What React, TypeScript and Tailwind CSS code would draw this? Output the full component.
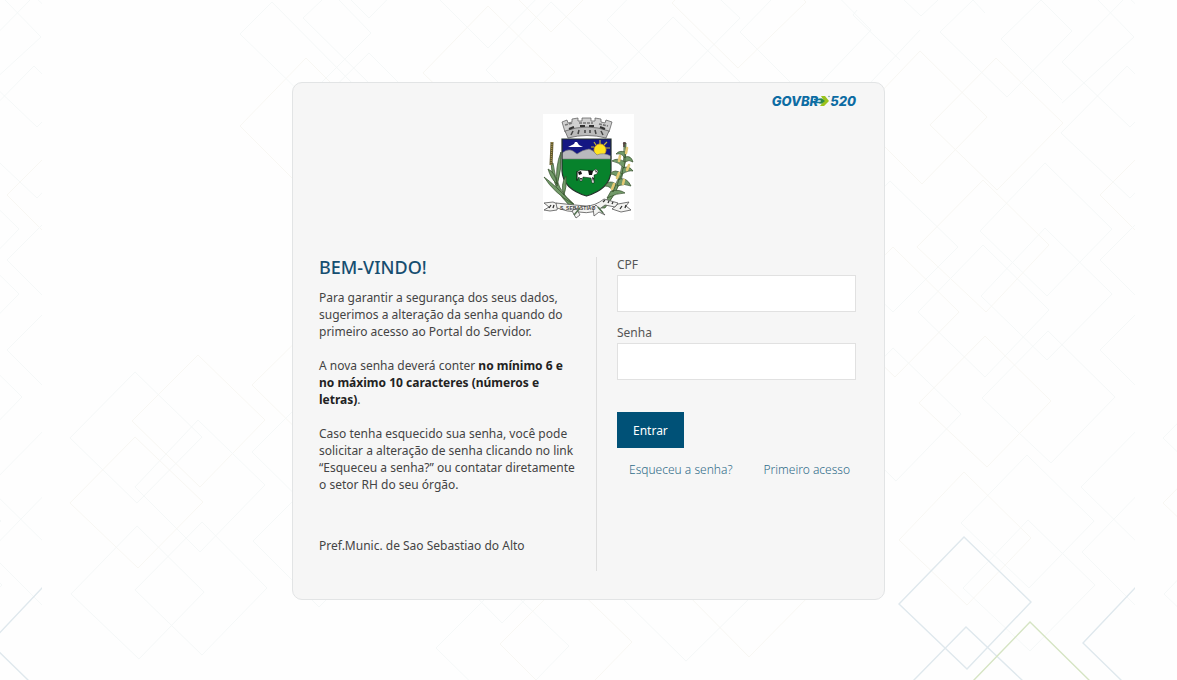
import React from "react";

const faint = [
  "920,51 987,117 922,184 856,118",
  "1045,163 1112,229 1047,296 980,231",
  "1045,228 1112,294 1047,360 981,296",
  "996,58 1063,123 997,190 930,125",
  "1127,66 1194,132 1130,198 1061,133",
  "1127,-4 1196,62 1130,127 1062,62",
  "983,180 1049,245 986,312 917,247",
  "983,245 1049,310 985,377 918,312",
  "890,181 958,247 893,312 825,247",
  "893,247 959,312 895,377 827,312",
  "1048,331 1115,397 1051,463 982,398",
  "893,348 961,414 896,481 828,414",
  "985,336 1051,401 987,467 919,403",
  "1027,455 1094,521 1029,588 961,523",
  "1028,520 1095,585 1030,651 963,588",
  "964,472 1031,538 967,605 899,540",
  "1147,420 1214,487 1148,553 1081,487",
  "1147,485 1214,552 1148,618 1082,552",
  "1166,129 1232,195 1166,261 1100,195",
  "1166,194 1232,260 1166,326 1100,260",
  "1166,284 1232,350 1166,416 1100,350",
  "198,355 265,420 200,487 132,421",
  "198,420 265,485 200,552 135,487",
  "135,372 202,437 137,503 70,438",
  "135,437 203,502 138,568 70,503",
  "137,526 204,592 139,659 71,594",
  "202,522 267,588 202,655 135,590",
  "318,320 385,385 319,451 252,385",
  "318,386 385,452 319,518 252,452",
  "319,475 385,541 319,607 253,541",
  "306,58 372,124 306,192 240,126",
  "369,53 434,118 369,184 303,118",
  "369,-48 434,-48 369,18 303,-48",
  "488,6 555,72 488,136 423,73",
  "551,2 618,67 552,136 486,70",
  "488,-84 551,-16 488,48 422,-18",
  "551,-100 617,-34 551,32 485,-34",
  "673,17 740,82 673,148 607,84",
  "672,-46 740,18 673,86 607,20",
  "738,-64 806,2 738,68 672,3",
  "806,-36 871,30 806,98 740,32",
  "502,582 569,646 503,714 436,648",
  "566,578 632,642 566,710 500,644",
  "502,490 568,556 502,623 436,556",
  "686,530 752,596 686,661 620,596",
  "749,524 815,590 749,657 683,590",
];

const openFaint =
  "M973 0 985 13 940 32 1007 97 1072 31 1041 0 1001 39 1062 100M1098 0 1134 37 1062 103M272 2 240 34 306 98 371 33 339 0M272 2 351 82M322 0 303 18 370 84M857 10 853 15 900 60M904 0 921 16 938 0M920 30 856 98";

function Tile({ x }: { x: number }) {
  return (
    <svg x={x} y="0" width="1093" height="680" viewBox="42 0 1093 680" overflow="hidden">
      <g fill="none" strokeWidth="1">
        {faint.map((points, i) => (
          <polygon key={points} points={points} stroke={i % 3 ? "#f5f8f8" : "#f8f7f3"} />
        ))}
        <path d={openFaint.replace("985 13 940 32", "985 13M973 0 940 32")} stroke="#f5f8f8" />
        <g stroke="#dfe8ed" strokeWidth="1.400">
          <polygon points="964,537 1031,602 967,669 899,604" />
          <path d="M913 681 966 627 1023 681M1136 587 1083 643 1122 681" />
        </g>
        <path d="M973 681 1030 622 1090 681" stroke="#d5e4c3" strokeWidth="1.400" />
      </g>
    </svg>
  );
}

function Background() {
  return (
    <svg className="absolute inset-0 -z-10 h-full w-full" viewBox="0 0 1177 680" preserveAspectRatio="xMidYMid slice" aria-hidden="true">
      <Tile x={-1051} />
      <Tile x={42} />
      <Tile x={1135} />
    </svg>
  );
}

function Crest() {
  return (
    <svg className="h-[106px] w-[91px]" viewBox="0 0 91 106" role="img" aria-label="Brasão">
      <rect width="91" height="106" fill="#fff" />
      <g stroke="#555" strokeWidth=".7" fill="#d0d0d0">
        <path d="M19 8 24 6 25 9 29 8 29 5 35 4 35 7 39 7 39 4 48 4 48 7 52 7 52 4 58 5 58 8 62 9 63 6 69 8 66 18 22 18Z" />
        <path d="M22 17Q44 9 66 17L63 24Q44 19 25 24Z" fill="#bbb" />
      </g>
      <path d="M22 11 30 9M36 9 50 9M56 10 65 12" stroke="#777" strokeWidth="1.600" strokeDasharray="3 1" />
      <path d="M26 15 31 13M37 12H42M46 12H51M57 13 62 15" stroke="#333" strokeWidth="2.200" />
      <path d="M28 21 30 17M35 20 36 16M42 19V16M47 19V16M53 20 52 16M60 21 58 17" stroke="#444" strokeWidth="1.500" />
      <path d="M19 25H68V57Q67 75 43.500 82Q20 75 19 57Z" fill="#07822c" />
      <path d="M19 25H68V44H19Z" fill="#141783" />
      <path d="M57 26V30M51 28 53 31M64 28 61 31M48 33H51M67 34H63" stroke="#c9b53a" strokeWidth="1.200" />
      <circle cx="57" cy="36" r="6" fill="#ffe320" stroke="#e0a91b" strokeWidth=".8" />
      <path d="M19 39Q25 34 30 37L34 40Q39 36 46 35 50 36 54 41 60 38 68 42V45H19Z" fill="#b9b9bd" stroke="#777" strokeWidth=".6" />
      <path d="M25 33 31 30 32 28 34 28 36 31 40 33Z" fill="#fff" />
      <path d="M19 25H68V57Q67 75 43.500 82Q20 75 19 57Z" fill="none" stroke="#24302a" strokeWidth="1.200" />
      <path d="M34 58 37 56 50 57 53 55 55 57 54 60 51 61 51 69H49L48 64 40 63 39 67H37L36 63 34 66Z" fill="#fff" stroke="#111" strokeWidth=".5" />
      <path d="M35 58 38 57 39 60 36 61ZM45 56 50 57 49 61 46 61ZM52 56 54 57 53 59ZM49 63 51 64 50 68ZM37 64 39 64 38 67Z" fill="#111" />
      <path d="M34 57V67" stroke="#111" strokeWidth=".8" />
      <g fill="#719968" stroke="#354f2b" strokeWidth=".7">
        <path d="M8 49Q9 76 28 93L31 90Q13 77 10 49Z" />
        <path d="M1 63Q11 70 30 90 11 79 1 63ZM5 55Q12 58 14 70 8 65 5 55ZM18 38Q12 52 14 72 19 55 18 38ZM23 62Q17 71 21 81 24 73 23 62Z" />
        <path d="M81 29Q84 61 58 94L62 94Q85 66 83 29Z" />
        <path d="M82 38Q76 36 73 40 79 39 82 44ZM82 43Q88 41 90 48 86 45 82 48ZM82 48Q74 43 69 47 76 48 81 54ZM80 54Q86 51 90 57 86 56 79 60ZM79 60Q72 54 67 60 73 60 76 66ZM76 65Q84 63 88 72 82 69 74 72ZM73 70Q66 65 62 72 68 72 70 78ZM68 77Q77 75 82 79 74 79 64 84Z" />
      </g>
      <path d="M9 28 8 51" stroke="#615930" strokeWidth="3" />
      <path d="M9 28 8 51" stroke="#a9954b" strokeWidth="1.200" strokeDasharray="1 1" />
      <path d="M76 47 77 42M84 56 86 51M74 64 76 59M69 75 71 70M83 39 84 34M80 70 81 66" stroke="#e4c974" strokeWidth="2.600" strokeLinecap="round" />
      <path d="M81 28V33M80 30 83 29" stroke="#554643" strokeWidth="1.600" />
      <g fill="#f3f3f1" stroke="#555" strokeWidth=".8">
        <path d="M1 89 10 88 15 90 14 96 7 97 1 96 6 93ZM75 90 86 88 83 92 88 96 78 98 69 95Z" />
        <path d="M13 89Q31 91 43 92 52 92 61 85L75 89 72 93 62 91Q51 101 36 98 24 98 14 94Z" />
        <path d="M29 97 33 94 37 101 33 104ZM53 91 62 101 56 98 51 102 50 94Z" />
      </g>
      <text x="17" y="96" fontSize="5" fontWeight="700" fontFamily="Liberation Sans, sans-serif" fill="#444">S. SEBASTIÃO</text>
      <path d="M60 88 62 86M65 89 66 87M69 90 70 88M6 94 8 91M10 94 11 91M77 95 79 92M82 94 83 91" stroke="#333" strokeWidth="1.300" />
      <path d="M31 101 37 94M55 93 60 99" stroke="#557353" strokeWidth="1.600" />
    </svg>
  );
}

function Brand() {
  return (
    <div className="flex h-4 items-center justify-end font-['Inter',sans-serif] text-[13px] leading-4 font-extrabold text-[#0d6ca3] italic">
      <span>GOVBR</span>
      <svg className="-ml-1 h-3 w-4" viewBox="0 0 16 12" aria-hidden="true">
        <path d="M0 4.500H8M1 7.500H8" stroke="#1475a5" strokeWidth="1.400" />
        <path d="M7 1H11L15 6 10 11H6L10 6Z" fill="#9bc31c" />
        <path d="M5 3.500H8L11 6 8 8.500H5L7 6Z" fill="#2d8a48" />
        <circle cx="15" cy="1.500" r=".8" fill="#6a9b9b" />
      </svg>
      <span>520</span>
    </div>
  );
}

function Field({ id, label, type }: { id: string; label: string; type: string }) {
  return (
    <div className="flex flex-col gap-[3px]">
      <label htmlFor={id} className="leading-[15px] text-[#555]">{label}</label>
      <input id={id} type={type} className="h-[37px] w-full border border-[#e1e1e1] bg-white px-3 outline-none" />
    </div>
  );
}

export default function App() {
  return (
    <main className="relative isolate flex min-h-screen flex-col items-center overflow-hidden bg-[#fefefe] px-4 pt-[82px] pb-20 font-['Noto_Sans',sans-serif] text-xs leading-[17px] text-[#444]">
      <Background />
      <section className="w-full max-w-[593px] rounded-[10px] border border-[#e2e4e5] bg-[#f6f6f6] pt-[10px] pr-7 pb-7 pl-[26px]">
        <Brand />
        <div className="mt-[5px] flex justify-center pl-0.5">
          <Crest />
        </div>
        <div className="mt-[37px] grid sm:grid-cols-[278px_1fr]">
          <div className="min-h-[314px] border-r border-[#dedede] pr-5">
            <h1 className="text-lg leading-5 font-medium text-[#164e70]">BEM-VINDO!</h1>
            <p className="mt-3">Para garantir a segurança dos seus dados, sugerimos a alteração da senha quando do primeiro acesso ao Portal do Servidor.</p>
            <p className="mt-[17px]">A nova senha deverá conter <strong className="text-[#222]">no mínimo 6 e no máximo 10 caracteres (números e letras)</strong>.</p>
            <p className="mt-[17px]">Caso tenha esquecido sua senha, você pode solicitar a alteração de senha clicando no link “Esqueceu a senha?” ou contatar diretamente o setor RH do seu órgão.</p>
            <p className="mt-11">Pref.Munic. de Sao Sebastiao do Alto</p>
          </div>
          <form className="pl-5" onSubmit={(e) => e.preventDefault()}>
            <div className="flex flex-col gap-[13px]">
              <Field id="cpf" label="CPF" type="text" />
              <Field id="senha" label="Senha" type="password" />
            </div>
            <button type="submit" className="mt-8 h-9 bg-[#005177] px-4 text-white">Entrar</button>
            <div className="mt-[13px] flex justify-between pr-1.5 pl-3 font-light text-[#2f6b88]">
              <a href="#senha">Esqueceu a senha?</a>
              <a href="#cpf">Primeiro acesso</a>
            </div>
          </form>
        </div>
      </section>
    </main>
  );
}
